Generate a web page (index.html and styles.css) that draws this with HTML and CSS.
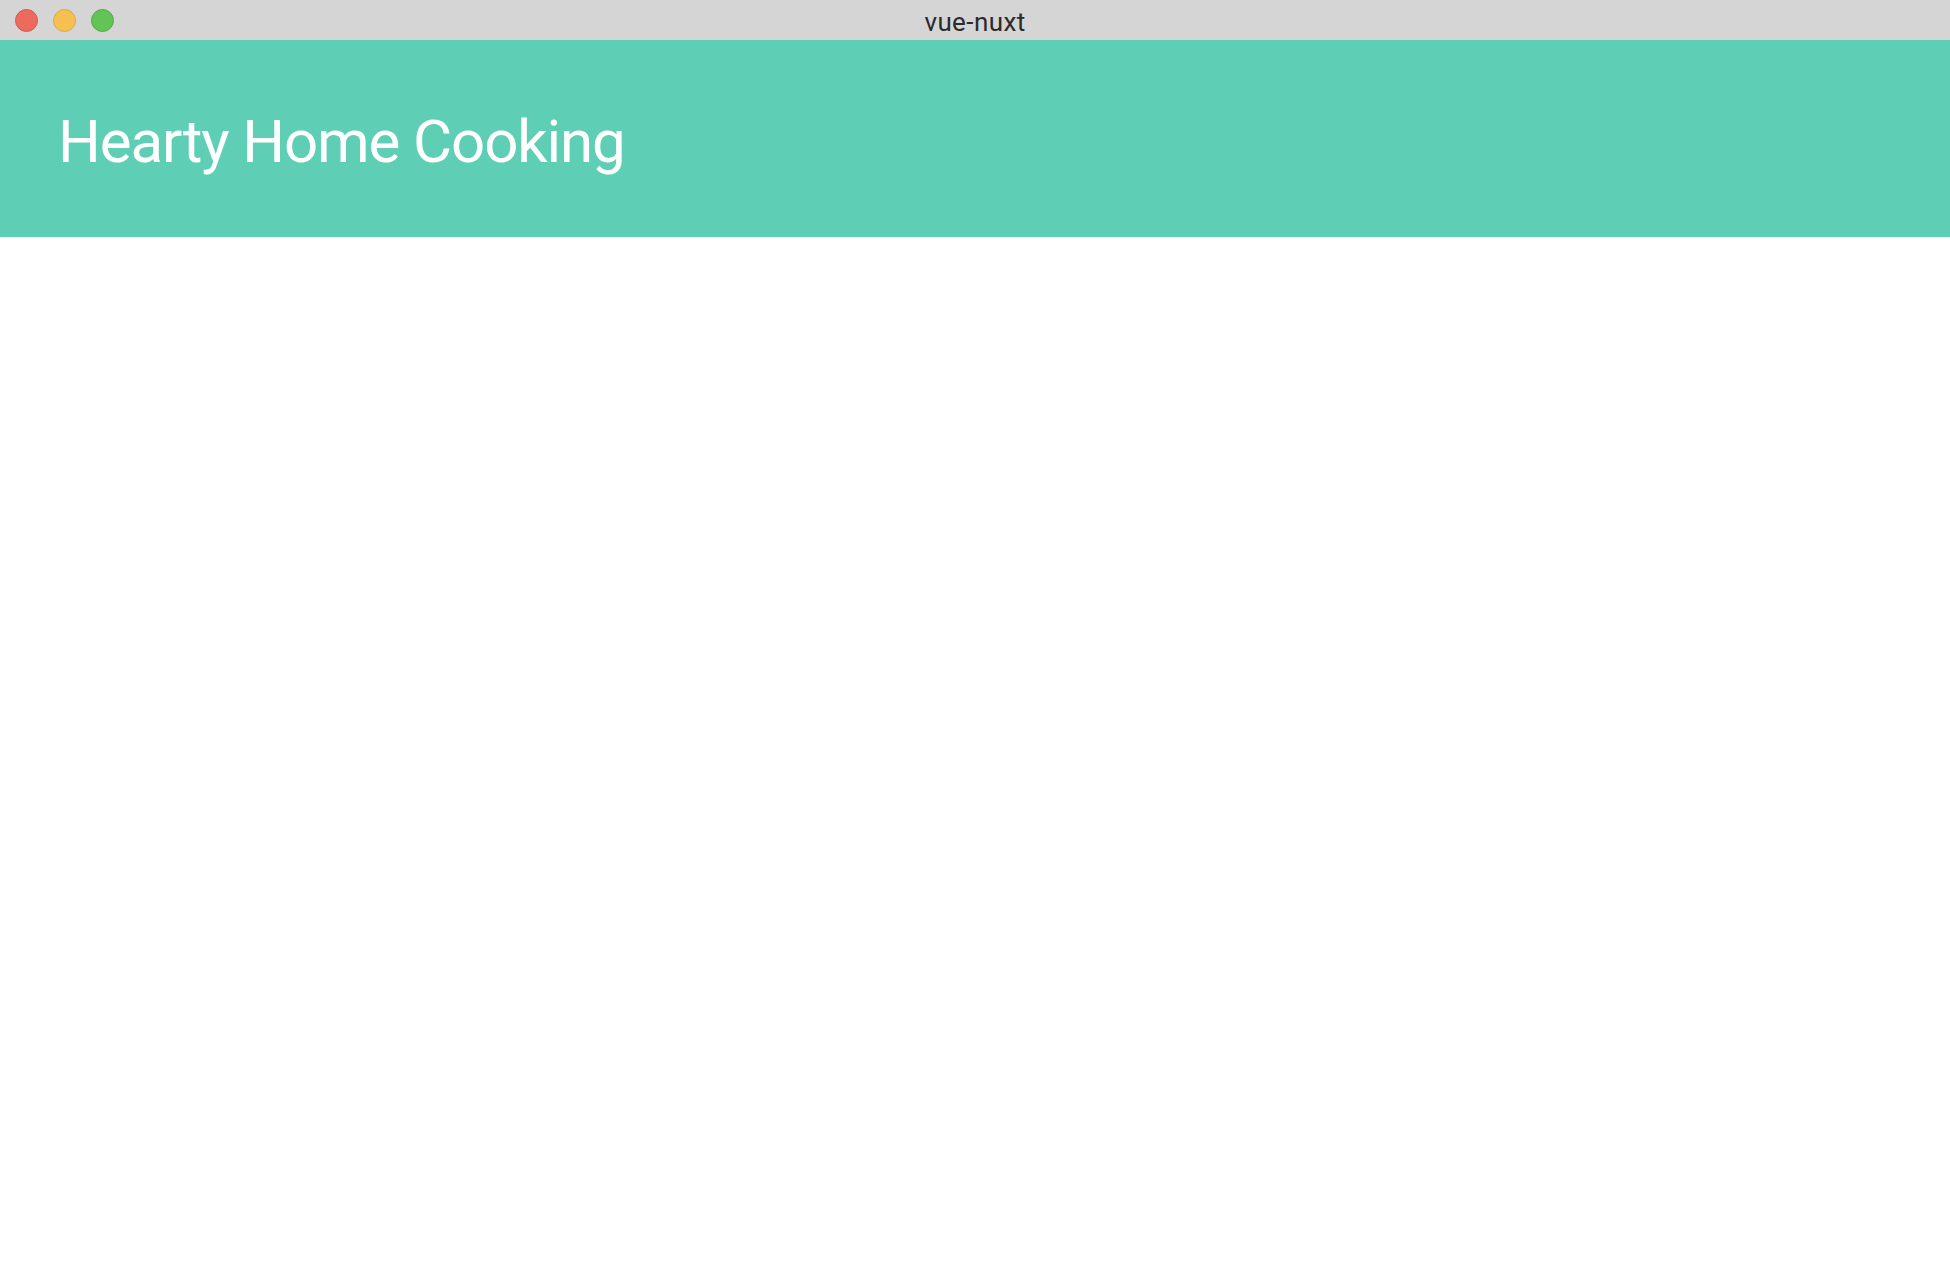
FILE: index.html
```html
<!DOCTYPE html>
<html lang="en">
<head>
<meta charset="utf-8">
<title>vue-nuxt</title>
<link rel="stylesheet" href="styles.css">
</head>
<body>
<div class="window">
  <div class="titlebar">
    <div class="lights">
      <span class="light red"></span>
      <span class="light yellow"></span>
      <span class="light green"></span>
    </div>
    <div class="title">vue-nuxt</div>
    <div class="spacer"></div>
  </div>
  <header class="hero">
    <h1 class="hero-title">Hearty Home Cooking</h1>
  </header>
  <main class="content"></main>
</div>
</body>
</html>
```

FILE: styles.css
```css
html, body {
  margin: 0;
  padding: 0;
  background: #ffffff;
}

.window {
  width: 1950px;
  height: 1266px;
  display: flex;
  flex-direction: column;
  background: #ffffff;
}

.titlebar {
  height: 40px;
  flex: 0 0 40px;
  background: #d5d5d5;
  display: grid;
  grid-template-columns: 1fr auto 1fr;
  align-items: center;
  box-sizing: border-box;
}

.lights {
  display: flex;
  align-items: center;
  gap: 15px;
  padding-left: 15px;
}

.light {
  width: 23px;
  height: 23px;
  border-radius: 50%;
  box-sizing: border-box;
}

.red { background: #ed6a5e; border: 1px solid #d9574c; }
.yellow { background: #f5c04f; border: 1px solid #dfa93c; }
.green { background: #61c454; border: 1px solid #50ad43; }

.title {
  font-family: Roboto, "Noto Sans", sans-serif;
  font-size: 26px;
  color: #2a2a2a;
  height: 40px;
  box-sizing: border-box;
  padding-top: 4px;
  line-height: 36px;
  letter-spacing: 0.4px;
}

.hero {
  height: 197px;
  flex: 0 0 197px;
  background: #5ecfb4;
  box-sizing: border-box;
  padding: 72px 0 0 58px;
}

.hero-title {
  margin: 0;
  font-family: Roboto, "Noto Sans", sans-serif;
  font-weight: 400;
  font-size: 60px;
  line-height: 60px;
  color: #ffffff;
  letter-spacing: -1.1px;
}

.content {
  flex: 1;
}
```
